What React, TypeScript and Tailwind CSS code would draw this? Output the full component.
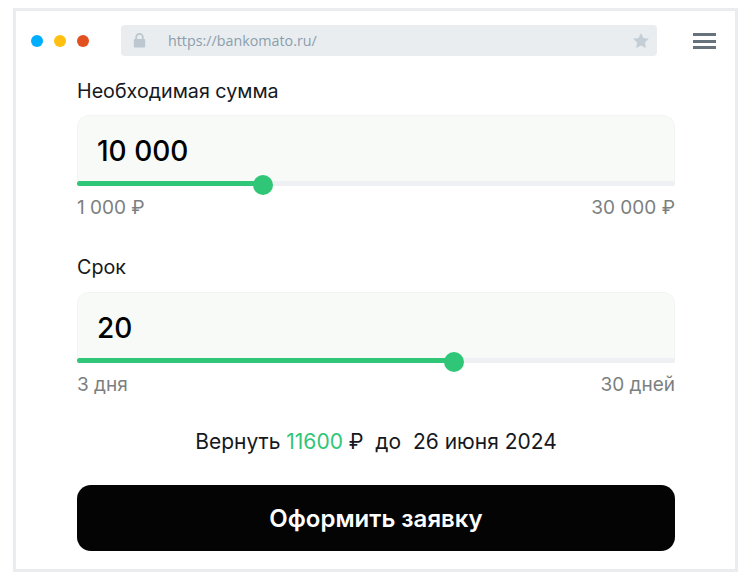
export default function App() {
  const Slider = ({ value, pct, min, max }: { value: string; pct: number; min: string; max: string }) => (
    <div>
      <div className="relative h-[71px] rounded-t-xl border border-b-0 border-[#f3f5f3] bg-[#f8faf8]">
        <div className="pl-[19px] pt-[15px] text-[28px] leading-[40px] font-medium text-black">{value}</div>
        <div className="absolute -left-px -right-px bottom-0 h-[5px] rounded-full bg-[#eef0f3]">
          <div className="relative h-full rounded-full bg-[#2fc677]" style={{ width: `${pct}%` }}>
            <div className="absolute right-[-10px] top-[-6px] h-5 w-5 rounded-full bg-[#2fc677]" />
          </div>
        </div>
      </div>
      <div className="mt-[10px] flex justify-between text-[19px] leading-[24px] text-[#7c7f80]">
        <span>{min}</span>
        <span>{max}</span>
      </div>
    </div>
  );

  return (
    <div className="h-[572px] w-[751px] bg-white font-['Inter',sans-serif]">
      <div className="ml-[13px] h-[572px] w-[725px] pt-[8px]">
        <div className="h-[564px] border-[3px] border-[#e9edf0] bg-white">
          <div className="flex h-[63px] items-start pl-[15px] pt-[14px]">
            <div className="flex shrink-0 gap-[11px] pt-[10px]">
              <span className="h-3 w-3 rounded-full bg-[#00aeff]" />
              <span className="h-3 w-3 rounded-full bg-[#ffc00f]" />
              <span className="h-3 w-3 rounded-full bg-[#e2501f]" />
            </div>
            <div className="ml-[32px] flex h-[31px] w-[536px] shrink-0 items-center rounded bg-[#e9edf0] pl-[12px] pr-[8px]">
              <svg width="13" height="15" viewBox="0 0 13 15" className="shrink-0">
                <path d="M3.2 6.5V4.2a3.3 3.3 0 0 1 6.6 0v2.3" fill="none" stroke="#bcc7cf" strokeWidth="1.8" />
                <rect x="0.8" y="6" width="11.4" height="8.5" rx="1" fill="#bcc7cf" />
              </svg>
              <span className="ml-[22px] font-['Open_Sans',sans-serif] text-[14.3px] text-[#8c9eac]">https://bankomato.ru/</span>
              <svg width="16" height="15" viewBox="0 0 24 23" className="ml-auto shrink-0">
                <path d="M12 0l3.7 7.6 8.3 1.2-6 5.9 1.4 8.3L12 19l-7.4 4L6 14.7 0 8.8l8.3-1.2z" fill="#c3ced6" />
              </svg>
            </div>
            <div className="ml-[36px] mt-[8px] flex w-[23px] shrink-0 flex-col gap-[3.5px]">
              <span className="h-[3px] bg-[#68727c]" />
              <span className="h-[3px] bg-[#68727c]" />
              <span className="h-[3px] bg-[#68727c]" />
            </div>
          </div>
          <div className="pl-[61px] pr-[60px]">
            <div className="mb-[9px] pt-[2px] text-[19.7px] leading-[30px] text-[#16181d]">Необходимая сумма</div>
            <Slider value="10 000" pct={31.1} min="1 000 ₽" max="30 000 ₽" />
            <div className="mb-[10px] mt-[32px] text-[19.7px] leading-[30px] text-[#16181d]">Срок</div>
            <Slider value="20" pct={63} min="3 дня" max="30 дней" />
            <div className="mt-[30px] text-center text-[21px] leading-[30px] text-[#16181d]">
              Вернуть <span className="text-[#2fc677]">11600</span> ₽&nbsp; до&nbsp; 26 июня 2024
            </div>
            <button className="mt-[28px] block h-[66px] w-full rounded-[14px] bg-[#040404] pt-[2px] text-center text-[24px] font-semibold text-white">
              Оформить заявку
            </button>
          </div>
        </div>
      </div>
    </div>
  );
}
